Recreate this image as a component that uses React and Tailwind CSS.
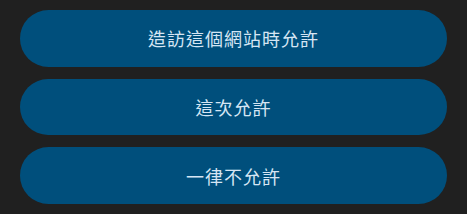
export default function App() {
  const items = ["造訪這個網站時允許", "這次允許", "一律不允許"];
  return (
    <div className="w-[467px] h-[214px] bg-[#202020] flex flex-col gap-[12px] px-[20px] py-[10px]" style={{ fontFamily: '"Noto Sans CJK TC", "Noto Sans", sans-serif' }}>
      {items.map((t) => (
        <button key={t} className="h-[57px] w-full rounded-full bg-[#004f7c] text-[#d6e6f4] text-[18px] leading-none flex items-center justify-center tracking-[1px]">
          {t}
        </button>
      ))}
    </div>
  );
}
